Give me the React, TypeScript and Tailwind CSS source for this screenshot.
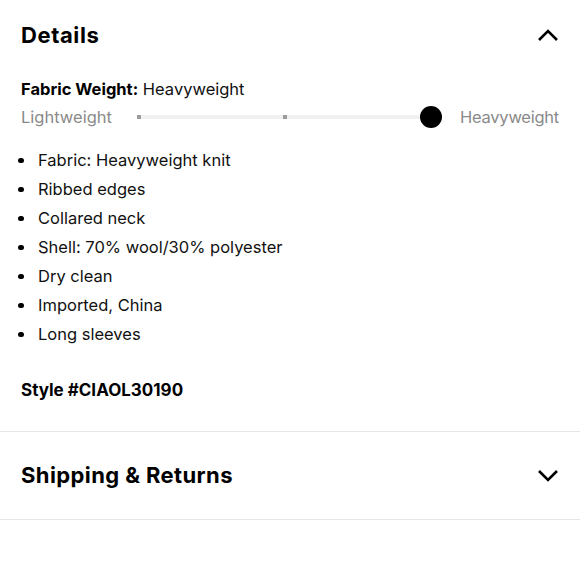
import React from "react";

const items = [
  "Fabric: Heavyweight knit",
  "Ribbed edges",
  "Collared neck",
  "Shell: 70% wool/30% polyester",
  "Dry clean",
  "Imported, China",
  "Long sleeves",
];

function Chevron({ up }: { up?: boolean }) {
  return (
    <svg width="22" height="14" viewBox="0 0 22 14" fill="none">
      {up ? (
        <path d="M2 12 L11 3 L20 12" stroke="#000" strokeWidth="2.6" />
      ) : (
        <path d="M2 2 L11 11 L20 2" stroke="#000" strokeWidth="2.6" />
      )}
    </svg>
  );
}

export default function App() {
  return (
    <div
      className="w-[580px] h-[580px] bg-white text-[#111]"
      style={{ fontFamily: "Inter, 'Liberation Sans', sans-serif" }}
    >
      <div className="px-[21px] pt-[20px] pb-[30px] border-b border-[#e6e6e6]">
        <div className="flex items-center justify-between h-[30px]">
          <h2 className="text-[22px] font-bold leading-[30px] tracking-[0.6px] text-black">Details</h2>
          <Chevron up />
        </div>
        <div className="mt-[28px] text-[16.5px] leading-[22px]">
          <span className="font-bold text-black">Fabric Weight:</span> Heavyweight
        </div>
        <div className="mt-[6px] flex items-center h-[22px]">
          <span className="text-[16.5px] text-[#8a8a8a] leading-[22px] w-[116px]">Lightweight</span>
          <div className="relative flex-1 h-[4px] bg-[#f1f1f1] mr-[29px]">
            <div className="absolute left-[0px] top-0 w-[4px] h-[4px] bg-[#9b9b9b]" />
            <div className="absolute left-[146px] top-0 w-[4px] h-[4px] bg-[#9b9b9b]" />
            <div className="absolute right-[-11px] top-[-9px] w-[22px] h-[22px] rounded-full bg-black" />
          </div>
          <span className="text-[16.5px] text-[#8a8a8a] leading-[22px] tracking-[-0.25px]">Heavyweight</span>
        </div>
        <ul className="mt-[18px] flex flex-col">
          {items.map((t) => (
            <li key={t} className="flex items-center h-[29px] text-[16.5px]">
              <span className="w-[20px] ml-[-3px] flex">
                <span className="block w-[5.5px] h-[5.5px] rounded-full bg-black" />
              </span>
              {t}
            </li>
          ))}
        </ul>
        <div className="mt-[30px] text-[17px] font-bold leading-[22px] tracking-[0px] text-black">Style #CIAOL30190</div>
      </div>
      <div className="px-[21px] h-[88px] flex items-center justify-between border-b border-[#e6e6e6]">
        <h2 className="text-[22px] font-bold tracking-[0.4px] text-black">Shipping &amp; Returns</h2>
        <Chevron />
      </div>
    </div>
  );
}
